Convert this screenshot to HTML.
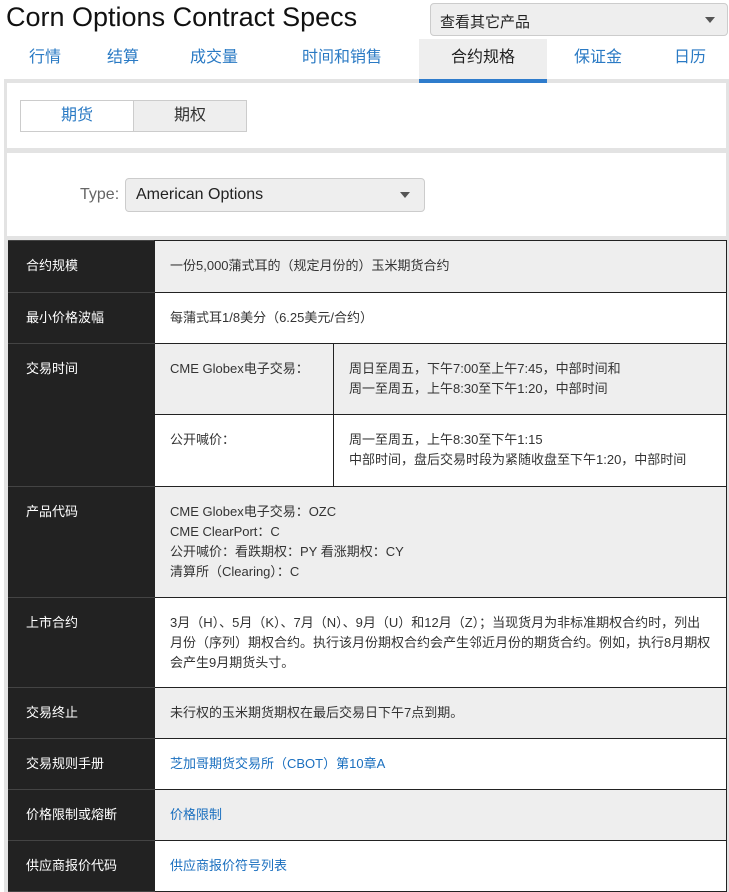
<!DOCTYPE html>
<html><head><meta charset="utf-8"><style>
*{box-sizing:border-box;margin:0;padding:0}
body{width:729px;height:892px;background:#fff;font-family:"Liberation Sans","Noto Sans CJK SC",sans-serif;color:#333;position:relative;overflow:hidden}
.abs{position:absolute}
h1{position:absolute;left:6px;top:0;font-size:27px;font-weight:normal;color:#111;line-height:34px}
.sel{position:absolute;left:430px;top:3px;width:298px;height:33px;background:#eee;border:1px solid #ccc;border-radius:4px;font-size:15px;color:#222;padding:7px 0 0 9px}
.caret{position:absolute;width:0;height:0;border-left:5px solid transparent;border-right:5px solid transparent;border-top:6px solid #555}
.tab{position:absolute;top:40px;height:40px;line-height:36px;font-size:16px;color:#2a7ac4;text-align:center}
.wrap{position:absolute;left:4px;top:79px;width:725px;height:813px;background:#e3e3e3}
.panel{position:absolute;left:3px;background:#fff;width:719px}
table{position:absolute;left:8px;top:240px;width:719px;border-collapse:collapse;font-size:13px}
td{border:1px solid #222;vertical-align:top;padding:15px 15px 0 15px;line-height:20px}
td.h{background:#222;color:#fff;width:146px;padding-left:17px;border-top-color:#444;border-bottom-color:#444}
.g{background:#eee}.w{background:#fff}
a{color:#1a6fbf;text-decoration:none}
</style></head><body>
<h1>Corn Options Contract Specs</h1>
<div class="sel">查看其它产品<div class="caret" style="left:274px;top:13px"></div></div>
<div class="wrap"></div>
<div class="abs" style="left:419px;top:39px;width:128px;height:44px;background:#eee;border-bottom:4px solid #2f7ccc"></div>
<div class="tab" style="left:20px;width:50px">行情</div>
<div class="tab" style="left:98px;width:50px">结算</div>
<div class="tab" style="left:182px;width:64px">成交量</div>
<div class="tab" style="left:296px;width:92px">时间和销售</div>
<div class="tab" style="left:419px;width:128px;color:#222">合约规格</div>
<div class="tab" style="left:566px;width:64px">保证金</div>
<div class="tab" style="left:665px;width:50px">日历</div>
<div class="panel" style="left:7px;top:83px;height:65px"></div>
<div class="abs" style="left:20px;top:100px;width:114px;height:32px;border:1px solid #ccc;color:#2a7ac4;font-size:16px;text-align:center;line-height:30px">期货</div>
<div class="abs" style="left:133px;top:100px;width:114px;height:32px;border:1px solid #ccc;background:#eee;color:#333;font-size:16px;text-align:center;line-height:30px">期权</div>
<div class="panel" style="left:7px;top:153px;height:83px"></div>
<div class="abs" style="left:80px;top:186px;font-size:16px;color:#666">Type:</div>
<div class="abs" style="left:125px;top:178px;width:300px;height:34px;background:#eee;border:1px solid #ccc;border-radius:4px;font-size:16px;color:#222;padding:7px 0 0 10px">American Options<div class="caret" style="left:274px;top:13px"></div></div>
<table>
<tr style="height:52px"><td class="h">合约规模</td><td class="g" colspan="2">一份5,000蒲式耳的（规定月份的）玉米期货合约</td></tr>
<tr style="height:51px"><td class="h">最小价格波幅</td><td class="w" colspan="2">每蒲式耳1/8美分（6.25美元/合约）</td></tr>
<tr style="height:71px"><td class="h" rowspan="2">交易时间</td><td class="g" style="width:179px">CME Globex电子交易：</td><td class="g">周日至周五，下午7:00至上午7:45，中部时间和<br>周一至周五，上午8:30至下午1:20，中部时间</td></tr>
<tr style="height:72px"><td class="w">公开喊价：</td><td class="w">周一至周五，上午8:30至下午1:15<br>中部时间，盘后交易时段为紧随收盘至下午1:20，中部时间</td></tr>
<tr style="height:111px"><td class="h">产品代码</td><td class="g" colspan="2">CME Globex电子交易：OZC<br>CME ClearPort：C<br>公开喊价：看跌期权：PY 看涨期权：CY<br>清算所（Clearing）：C</td></tr>
<tr style="height:90px"><td class="h">上市合约</td><td class="w" colspan="2">3月（H）、5月（K）、7月（N）、9月（U）和12月（Z）；当现货月为非标准期权合约时，列出月份（序列）期权合约。执行该月份期权合约会产生邻近月份的期货合约。例如，执行8月期权会产生9月期货头寸。</td></tr>
<tr style="height:51px"><td class="h">交易终止</td><td class="g" colspan="2">未行权的玉米期货期权在最后交易日下午7点到期。</td></tr>
<tr style="height:51px"><td class="h">交易规则手册</td><td class="w" colspan="2"><a>芝加哥期货交易所（CBOT）第10章A</a></td></tr>
<tr style="height:51px"><td class="h">价格限制或熔断</td><td class="g" colspan="2"><a>价格限制</a></td></tr>
<tr style="height:51px"><td class="h">供应商报价代码</td><td class="w" colspan="2"><a>供应商报价符号列表</a></td></tr>
</table>
</body></html>
